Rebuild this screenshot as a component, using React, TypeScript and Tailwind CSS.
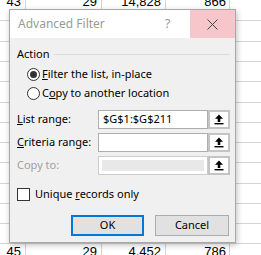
import React from "react";

type Row = { h: string; a: string; b: string; c: string; d: string };

const rows: Row[] = [
  { h: "h-[21px]", a: "43", b: "29", c: "14,828", d: "866" },
  { h: "h-[21px]", a: "", b: "", c: "", d: "" },
  { h: "h-[20px]", a: "", b: "", c: "", d: "" },
  { h: "h-[20px]", a: "", b: "", c: "", d: "" },
  { h: "h-[21px]", a: "", b: "", c: "", d: "" },
  { h: "h-[20px]", a: "", b: "", c: "", d: "" },
  { h: "h-[20px]", a: "", b: "", c: "", d: "" },
  { h: "h-[20px]", a: "", b: "", c: "", d: "" },
  { h: "h-[21px]", a: "", b: "", c: "", d: "" },
  { h: "h-[20px]", a: "", b: "", c: "", d: "" },
  { h: "h-[20px]", a: "", b: "", c: "", d: "" },
  { h: "h-[20px]", a: "", b: "", c: "", d: "" },
  { h: "h-[20px]", a: "45", b: "29", c: "4,452", d: "786" },
];

function Sheet() {
  return (
    <div className="flex flex-col font-['Liberation_Sans',sans-serif] text-[13px] leading-[14px] text-black">
      {rows.map((r, i) => (
        <div key={i} className={`${r.h} flex border-b border-[#d4d4d4]`}>
          <div className={`w-[26px] border-r border-[#d4d4d4] text-right pr-[4px] ${i === 0 ? "-mt-[5px]" : "pt-[1px]"}`}>{r.a}</div>
          <div className={`w-[76px] border-r border-[#d4d4d4] text-right pr-[4px] ${i === 0 ? "-mt-[5px]" : "pt-[1px]"}`}>{r.b}</div>
          <div className={`w-[64px] border-r border-[#d4d4d4] text-right pr-[4px] ${i === 0 ? "-mt-[5px]" : "pt-[1px]"}`}>{r.c}</div>
          <div className={`w-[64px] border-r border-[#d4d4d4] text-right pr-[3px] ${i === 0 ? "-mt-[5px]" : "pt-[1px]"}`}>{r.d}</div>
          <div className="flex-1" />
        </div>
      ))}
    </div>
  );
}

function PickButton() {
  return (
    <div className="w-[22px] h-full border-[2px] border-[#c4c4c4] bg-white flex items-center justify-center">
      <svg width="10" height="11" viewBox="0 0 10 11">
        <path d="M5 0.5 L9 4.8 H6.3 V8 H3.7 V4.8 H1 Z" fill="#000" />
        <rect x="0.5" y="9" width="9" height="1.4" fill="#000" />
      </svg>
    </div>
  );
}

function Radio({ checked, children }: { checked?: boolean; children: React.ReactNode }) {
  return (
    <div className="flex items-center h-[19px]">
      <div className="w-[13px] h-[13px] rounded-full border border-[#333] bg-white flex items-center justify-center">
        {checked && <div className="w-[7px] h-[7px] rounded-full bg-[#333]" />}
      </div>
      <span className="ml-[2px]">{children}</span>
    </div>
  );
}

function RangeRow({
  label,
  value,
  disabled,
}: {
  label: React.ReactNode;
  value?: string;
  disabled?: boolean;
}) {
  return (
    <div className="flex items-center h-[19px]">
      <div className={`w-[81px] ${disabled ? "text-[#a0a0a0]" : ""}`}>{label}</div>
      <div className="flex h-full">
        {disabled ? (
          <div className="w-[110px] h-full border border-[#cccccc] bg-white p-[3px]">
            <div className="w-full h-full bg-[#e8e8e8]" />
          </div>
        ) : (
          <div className="w-[110px] h-full border border-[#adadad] bg-white pl-[4px] flex items-center">
            {value}
          </div>
        )}
        <PickButton />
      </div>
    </div>
  );
}

export default function App() {
  return (
    <div className="relative w-[261px] h-[255px] overflow-hidden bg-white">
      <Sheet />

      <div className="absolute left-[9px] top-[9px] w-[227px] h-[234px] border border-[#a8a8a8] bg-[#f0f0f0] shadow-[1px_2px_6px_rgba(0,0,0,0.25)] flex flex-col font-['Noto_Sans',sans-serif] text-[11px] text-black">
        <div className="h-[28px] bg-white flex items-center">
          <span className="flex-1 pl-[8px] text-[#9a9a9a] text-[12px]">Advanced Filter</span>
          <div className="w-[45px] h-full flex items-center justify-center text-[#9a9a9a] text-[13px]">?</div>
          <div className="w-[45px] h-full bg-[#f7c6ca] flex items-center justify-center">
            <svg width="11" height="11" viewBox="0 0 11 11">
              <path d="M0.5 0.5 L10.5 10.5 M10.5 0.5 L0.5 10.5" stroke="#444" strokeWidth="1" />
            </svg>
          </div>
        </div>

        <div className="flex-1 flex flex-col pl-[7px] pr-[5px] pt-[8px]">
          <div className="flex items-center h-[16px]">
            <span>Action</span>
            <div className="flex-1 h-px bg-[#dcdcdc] ml-[4px]" />
          </div>

          <div className="flex flex-col pl-[10px] mt-[3px]">
            <Radio checked>
              <span className="underline">F</span>ilter the list, in-place
            </Radio>
            <Radio>
              C<span className="underline">o</span>py to another location
            </Radio>
          </div>

          <div className="flex flex-col gap-[4px] mt-[7px]">
            <RangeRow
              label={
                <>
                  <span className="underline">L</span>ist range:
                </>
              }
              value="$G$1:$G$211"
            />
            <RangeRow
              label={
                <>
                  <span className="underline">C</span>riteria range:
                </>
              }
            />
            <RangeRow label="Copy to:" disabled />
          </div>

          <div className="flex items-center mt-[12px] h-[15px]">
            <div className="w-[13px] h-[13px] border border-[#333] bg-white" />
            <span className="ml-[5px]">
              Unique <span className="underline">r</span>ecords only
            </span>
          </div>

          <div className="flex justify-end gap-[11px] mt-[13px] pr-[1px]">
            <button className="w-[73px] h-[21px] border-[2px] border-[#0078d7] bg-[#e1e1e1] flex items-center justify-center">
              OK
            </button>
            <button className="w-[74px] h-[21px] border border-[#adadad] bg-[#e1e1e1] flex items-center justify-center">
              Cancel
            </button>
          </div>
        </div>
      </div>
    </div>
  );
}
